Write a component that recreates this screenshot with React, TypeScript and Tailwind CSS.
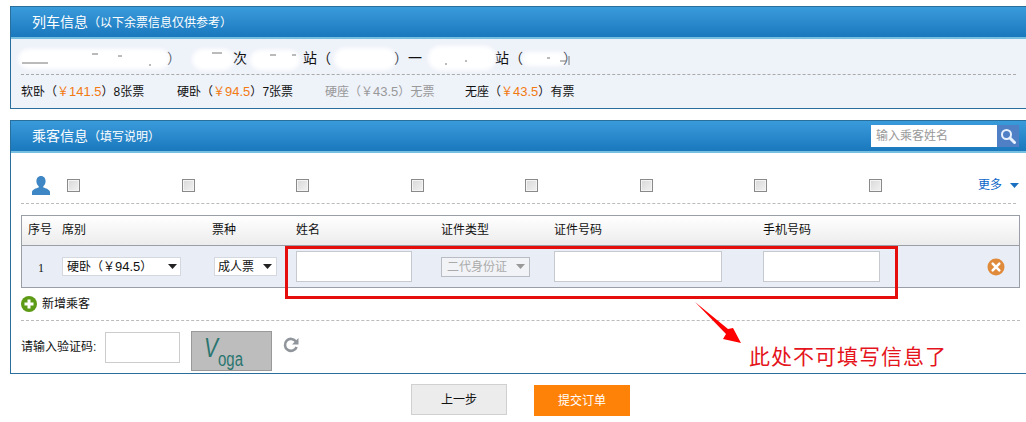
import React from "react";

const font = "[font-family:'Liberation_Sans','Noto_Sans_CJK_SC',sans-serif]";

function Check() {
  return <span className="block w-[13px] h-[13px] border border-[#8a8a8a] bg-[linear-gradient(135deg,#d8d8d8,#f2f2f2)] shadow-[inset_0_0_0_1px_#f4f4f4]" />;
}

function Caret({ color = "#222" }: { color?: string }) {
  return (
    <svg width="9" height="5" viewBox="0 0 9 5">
      <path d="M0 0h9L4.5 5z" fill={color} />
    </svg>
  );
}

function PanelHeader({ title, note, children }: { title: string; note: string; children?: React.ReactNode }) {
  return (
    <div className="h-[32px] flex items-center justify-between bg-[linear-gradient(#3a9bdb,#1a78bd)] border-b-2 border-[#77bfe0] pl-[21px] pr-[7px] text-white">
      <div className="flex items-baseline">
        <span className="text-[14px]">{title}</span>
        <span className="text-[12px]">{note}</span>
      </div>
      {children}
    </div>
  );
}

function Ticket({ seat, price, rest, w, muted }: { seat: string; price: string; rest: string; w: number; muted?: boolean }) {
  return (
    <div style={{ width: w }} className={muted ? "text-[#999]" : "text-[#111]"}>
      {seat}（<span className={muted ? "" : "text-[#f27a12]"}>￥<span className="text-[13px]">{price}</span></span>）{rest}
    </div>
  );
}

const boxes = [0, 1, 2, 3, 4, 5, 6, 7];

const blobs = [
  "left-[18px] top-[49px] w-[152px] h-[20px]",
  "left-[192px] top-[49px] w-[42px] h-[21px]",
  "left-[250px] top-[50px] w-[50px] h-[20px]",
  "left-[334px] top-[48px] w-[62px] h-[22px]",
  "left-[428px] top-[46px] w-[68px] h-[24px]",
  "left-[522px] top-[52px] w-[44px] h-[14px]",
];

export default function App() {
  return (
    <div className={`relative w-[1026px] h-[422px] overflow-hidden bg-white pt-[6px] pl-[10px] text-[12px] text-[#111] ${font}`}>
      {/* 列车信息 */}
      <section className="h-[103px] border border-r-0 border-[#2a6f9c] bg-[#eef2f9]">
        <PanelHeader title="列车信息" note="（以下余票信息仅供参考）" />
        <div className="h-[36px] pt-[4px] mx-[10px] border-b border-dashed border-[#aaa] flex items-center text-[14px]">
          <span className="ml-[146px]">）</span>
          <span className="ml-[52px]">次</span>
          <span className="ml-[56px]">站（</span>
          <span className="ml-[63px]">）一</span>
          <span className="ml-[73px]">站（</span>
          <span className="ml-[40px]">）</span>
        </div>
        <div className="flex items-center h-[33px] pl-[10px]">
          <Ticket seat="软卧" price="141.5" rest="8张票" w={156} />
          <Ticket seat="硬卧" price="94.5" rest="7张票" w={148} />
          <Ticket seat="硬座" price="43.5" rest="无票" w={140} muted />
          <Ticket seat="无座" price="43.5" rest="有票" w={130} />
        </div>
      </section>

      {/* 乘客信息 */}
      <section className="mt-[11px] h-[254px] border border-r-0 border-[#2a6f9c] bg-white">
        <PanelHeader title="乘客信息" note="（填写说明）">
          <div className="flex h-[22px] mb-[1px]">
            <div className="w-[126px] bg-white text-[#999] pl-[5px] flex items-center">输入乘客姓名</div>
            <div className="w-[22px] bg-[#4f7fc4] flex items-center justify-center">
              <svg width="16" height="16" viewBox="0 0 16 16" fill="none" stroke="#e8f2ff" strokeWidth="2">
                <circle cx="6.5" cy="6.5" r="4.5" />
                <path d="M10 10l4.5 4.5" strokeWidth="3" strokeLinecap="round" />
              </svg>
            </div>
          </div>
        </PanelHeader>

        <div className="mx-[10px] h-[51px] pt-[14px] border-b border-dashed border-[#bbb] flex items-center">
          <svg width="18" height="19" viewBox="0 0 18 19" className="ml-[11px] shrink-0">
            <path d="M9 0c3 0 4.6 2.4 4.6 5.2 0 2.2-1 4-2.3 5v1.3c2.6.8 6.2 2 6.7 4.3V19H0v-3.2c.5-2.3 4.1-3.5 6.7-4.3v-1.3c-1.3-1-2.3-2.8-2.3-5C4.4 2.4 6 0 9 0z" fill="#3f87c4" />
          </svg>
          <div className="ml-[17px] w-[815px] flex justify-between shrink-0">
            {boxes.map((b) => (
              <Check key={b} />
            ))}
          </div>
          <div className="ml-[96px] text-[#0b66c8] flex items-center gap-[8px] shrink-0 w-[42px]">
            <span className="shrink-0">更多</span>
            <span className="shrink-0"><Caret color="#1a6fc0" /></span>
          </div>
        </div>

        <div className="mx-[10px] mt-[11px] w-[999px] border border-[#9a9ea6]">
          <div className="h-[30px] pb-[2px] grid grid-cols-[34px_150px_84px_145px_113px_209px_1fr] pl-[6px] items-center bg-[linear-gradient(#ffffff,#ececec)] border-b border-[#9a9ea6]">
            <span>序号</span>
            <span>席别</span>
            <span>票种</span>
            <span>姓名</span>
            <span>证件类型</span>
            <span>证件号码</span>
            <span>手机号码</span>
          </div>
          <div className="h-[41px] grid grid-cols-[34px_150px_84px_145px_113px_209px_1fr] pl-[6px] items-center bg-[#e9eef6]">
            <span className="pl-[10px] font-['Liberation_Serif'] pt-[3px]">1</span>
            <div className="h-[19px] w-[119px] bg-white border border-[#d5d8de] flex items-center justify-between pl-[4px] pr-[3px]">
              <span>硬卧（￥<span className="text-[13px]">94.5</span>）</span>
              <Caret />
            </div>
            <div className="h-[19px] w-[63px] ml-[2px] bg-white border border-[#d5d8de] flex items-center justify-between pl-[3px] pr-[4px]">
              <span>成人票</span>
              <Caret />
            </div>
            <div className="h-[31px] w-[116px] bg-white border border-[#c6c9cf]" />
            <div className="h-[20px] w-[89px] bg-[#f1f3f7] border border-[#b9bcc2] flex items-center justify-between pl-[5px] pr-[4px] text-[#aaa]">
              <span>二代身份证</span>
              <Caret color="#999" />
            </div>
            <div className="h-[31px] w-[168px] bg-white border border-[#c6c9cf]" />
            <div className="flex items-center">
              <div className="h-[31px] w-[117px] bg-white border border-[#c6c9cf]" />
              <svg width="18" height="18" viewBox="0 0 18 18" className="ml-[107px]">
                <circle cx="9" cy="9" r="8.5" fill="#e08a3c" />
                <path d="M5.7 5.7l6.6 6.6M12.3 5.7l-6.6 6.6" stroke="#fff" strokeWidth="2.6" strokeLinecap="round" />
              </svg>
            </div>
          </div>
        </div>

        <div className="mx-[10px] w-[999px] h-[33px] border-b border-dashed border-[#bbb] flex items-center gap-[5px]">
          <svg width="16" height="16" viewBox="0 0 16 16">
            <circle cx="8" cy="8" r="8" fill="#5d9a16" />
            <path d="M8 3.5v9M3.5 8h9" stroke="#fff" strokeWidth="3" />
          </svg>
          <span>新增乘客</span>
        </div>

        <div className="mx-[10px] mt-[10px] flex items-start">
          <span className="mt-[7px] w-[84px] shrink-0">请输入验证码:</span>
          <div className="mt-[1px] w-[75px] h-[31px] border border-[#ccc] bg-white shrink-0" />
          <div className="ml-[11px] w-[81px] h-[40px] bg-[#bdbdbd] border border-[#999] shrink-0 overflow-hidden">
            <svg width="79" height="38" viewBox="0 0 79 38" fontFamily="'Liberation Sans',sans-serif" fill="#2a7570">
              <text x="12" y="25" fontSize="28" fontStyle="italic" textLength="39" lengthAdjust="spacingAndGlyphs">
                V<tspan fontSize="20" dy="9" fontStyle="normal">oga</tspan>
              </text>
            </svg>
          </div>
          <svg width="16" height="16" viewBox="0 0 16 16" className="ml-[11px] mt-[6px] shrink-0" fill="none">
            <path d="M13 4.6A6 6 0 1 0 13.6 10" stroke="#8f959a" strokeWidth="2.6" />
            <path d="M15.5 1v6.4H9z" fill="#8f959a" />
          </svg>
        </div>
      </section>

      <div className="mt-[10px] flex items-start pl-[401px] gap-[27px]">
        <div className="w-[96px] h-[31px] bg-[#ececec] border border-[#d0d0d0] flex items-center justify-center">上一步</div>
        <div className="w-[96px] h-[31px] mt-[1px] bg-[#ff8208] text-white flex items-center justify-center">提交订单</div>
      </div>

      {/* 截图上的涂抹 */}
      {blobs.map((b) => (
        <div key={b} className={`absolute ${b} bg-white rounded-full blur-[2px]`} />
      ))}
      <svg className="absolute left-[20px] top-[50px]" width="560" height="20" viewBox="0 0 560 20" fill="none" stroke="#777">
        <path d="M2 13h26M72 4h6M98 6h4M130 14v2M192 3h10M250 5h6M272 5h4M426 13v2M445 11h2" />
        <path d="M527 8h3M540 11h6M549 6v9" />
      </svg>

      {/* 截图上的标注 */}
      <div className="absolute left-[285px] top-[246px] w-[613px] h-[53px] border-[3px] border-[#e60d0d]" />
      <svg className="absolute left-[690px] top-[296px]" width="55" height="50" viewBox="0 0 55 50">
        <path d="M5 6 L38 33 L43 32 L51 47 L33 43 L36 38 Z" fill="#f00" />
      </svg>
      <div className="absolute left-[749px] top-[344px] text-[21px] leading-[26px] text-[#e5141c] tracking-[1px]">此处不可填写信息了</div>
    </div>
  );
}
